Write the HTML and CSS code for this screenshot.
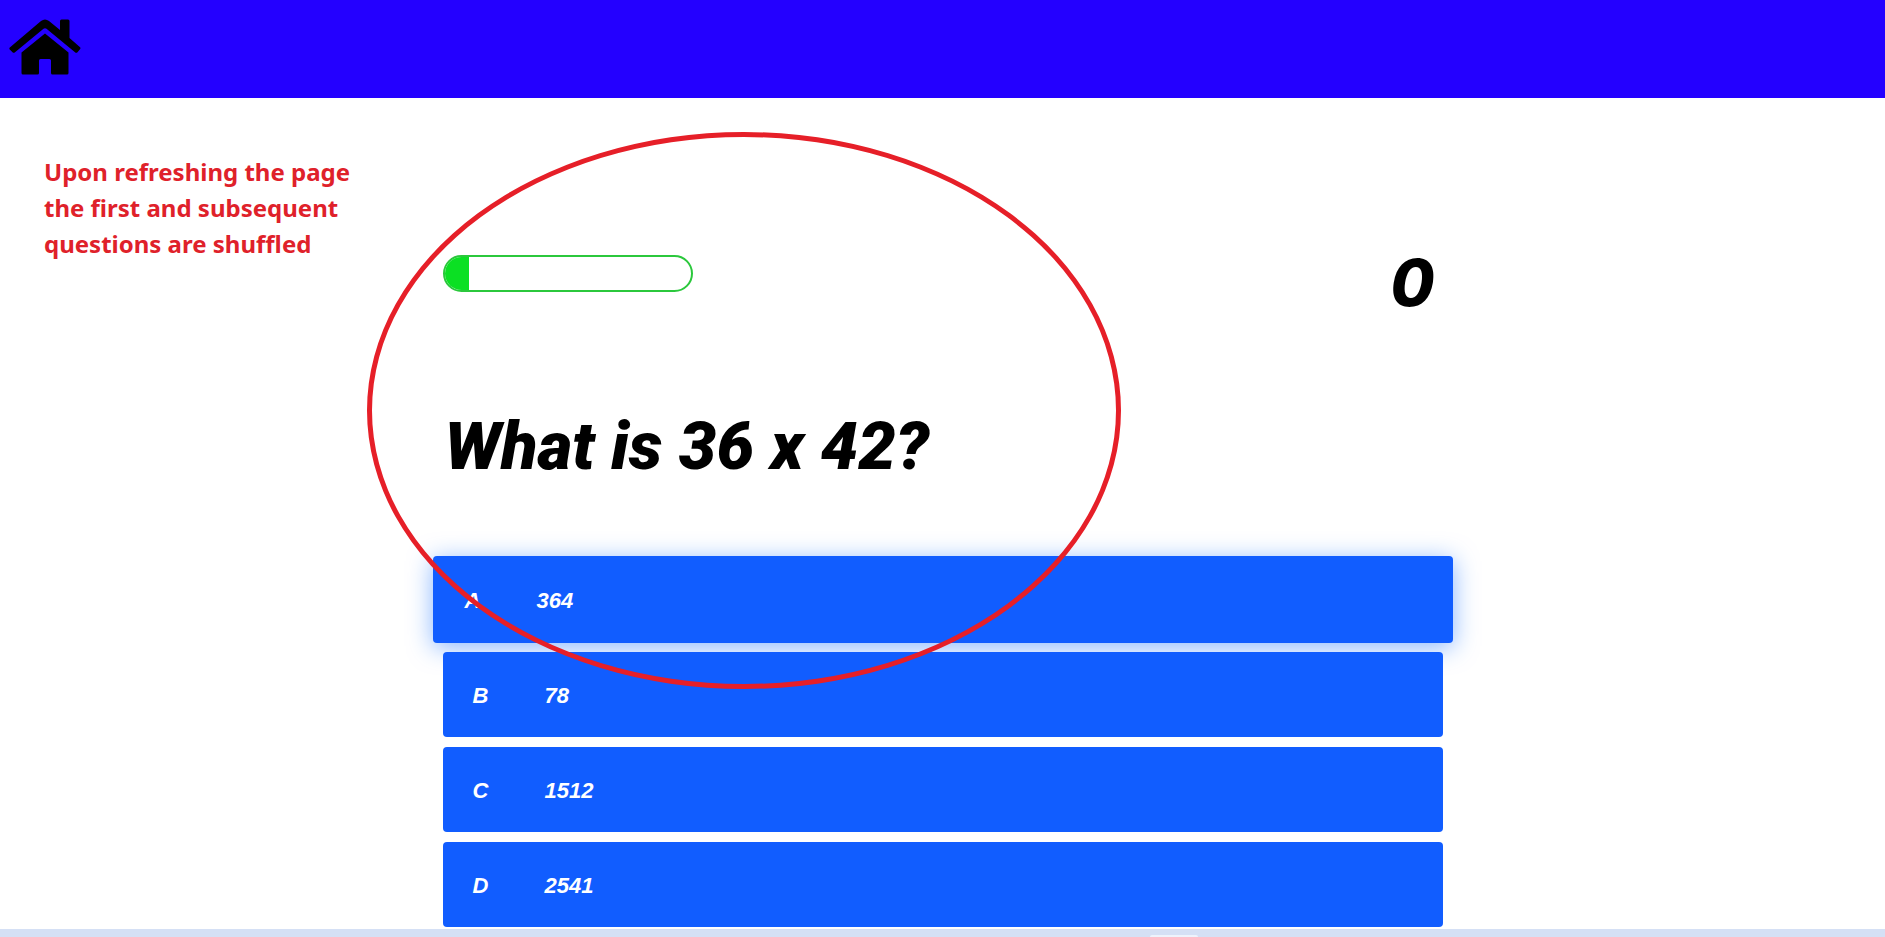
FILE: index.html
```html
<!DOCTYPE html>
<html lang="en">
<head>
<meta charset="utf-8">
<meta name="viewport" content="width=device-width, initial-scale=1">
<title>Quiz</title>
<link rel="stylesheet" href="styles.css">
</head>
<body>
<header class="topbar">
  <a class="home" href="#" aria-label="Home">
    <svg class="home-icon" viewBox="0 0 72 56" aria-hidden="true">
      <path d="M.8 28.500 32 2Q36 -1.200 40 2L51 11V2Q51 .5 52.500 .5H59Q60.500 .5 60.500 2V19L70.800 28Q72 29 71 30.200L68.500 33.200Q67.300 34.300 66 33.200L37.500 9.800Q36 8.600 34.500 9.800L6 33.200Q4.700 34.300 3.500 33.200L1 30.800Q-.2 29.500 .8 28.500Z"/>
      <path d="M36 14.500 59.500 33.500V54Q59.500 55.500 58 55.500H43.500Q42 55.500 42 54V41.500Q42 40 40.500 40H31.500Q30 40 30 41.500V54Q30 55.500 28.500 55.500H14Q12.500 55.500 12.500 54V33.500Z"/>
    </svg>
  </a>
</header>
<main class="page">
  <aside class="note">Upon refreshing the page<br>the first and subsequent<br>questions are shuffled</aside>
  <section class="quiz">
    <div class="hud">
      <div class="progress" role="progressbar" aria-label="Progress" aria-valuenow="10" aria-valuemin="0" aria-valuemax="100">
        <div class="progress-fill" style="width: 10%"></div>
      </div>
      <p class="score">0</p>
    </div>
    <h1 class="question">What is 36 x 42?</h1>
    <div class="choices">
      <button class="choice choice-active" type="button"><span class="prefix">A</span><span>364</span></button>
      <button class="choice" type="button"><span class="prefix">B</span><span>78</span></button>
      <button class="choice" type="button"><span class="prefix">C</span><span>1512</span></button>
      <button class="choice" type="button"><span class="prefix">D</span><span>2541</span></button>
    </div>
    <div class="circle" aria-hidden="true"></div>
  </section>
</main>
<footer class="taskbar"><div class="taskbar-tab"></div></footer>
</body>
</html>
```

FILE: styles.css
```css
* { box-sizing: border-box; }

body {
  margin: 0;
  min-height: 100vh;
  display: flex;
  flex-direction: column;
  background: #fff;
  color: #000;
  font-family: Roboto, Arial, sans-serif;
}

.topbar {
  height: 98px;
  padding: 19px 9px;
  background: #2400ff;
}

.home { display: inline-block; color: #000; }
.home-icon { display: block; width: 72px; height: 56px; }

.page {
  display: grid;
  grid-template-columns: 1fr minmax(0, 1000px) 1fr;
}

.note {
  padding: 56px 0 0 44px;
  color: #df212a;
  font: bold 24px/36px "Noto Sans", sans-serif;
  white-space: nowrap;
}

.quiz {
  position: relative;
  padding-top: 157px;
}

.hud {
  display: flex;
  justify-content: space-between;
  align-items: flex-start;
}

.progress {
  width: 250px;
  height: 37px;
  border: 2px solid #2bc83c;
  border-radius: 20px;
  overflow: hidden;
}

.progress-fill { height: 100%; background: #0be023; }

.score {
  margin: 0;
  padding-right: 8px;
  font-family: Inter, sans-serif;
  font-size: 64px;
  line-height: 56px;
  font-weight: 800;
  font-style: italic;
}

.question {
  margin: 94px 0 70px;
  padding-left: 2px;
  font-size: 67px;
  line-height: 82px;
  font-weight: 900;
  font-style: italic;
}

.choices {
  display: flex;
  flex-direction: column;
  gap: 10px;
}

.choice {
  display: flex;
  align-items: center;
  height: 85px;
  padding: 2px 30px 0;
  border: 0;
  border-radius: 4px;
  background: #115dff;
  color: #fff;
  font: italic bold 22px/32px "Liberation Sans", Arial, sans-serif;
  text-align: left;
}

.choice-active {
  height: 87px;
  margin: -1px -10px;
  padding: 2px 32px 0;
  box-shadow: 0 4px 24px rgba(17, 110, 255, 0.5);
}

.choice:not(.choice-active) { z-index: 1; }

.prefix { width: 72px; }

.circle {
  position: absolute;
  top: 34px;
  left: -76px;
  z-index: 2;
  width: 754px;
  height: 557px;
  border: 5px solid #e61f28;
  border-radius: 50%;
  pointer-events: none;
}

.taskbar {
  flex: 1;
  min-height: 8px;
  margin-top: 2px;
  padding: 6px 0 0 61%;
  background: #d5e0f5;
}

.taskbar-tab {
  width: 48px;
  height: 2px;
  border-radius: 4px 4px 0 0;
  background: #eef3fc;
}
```
